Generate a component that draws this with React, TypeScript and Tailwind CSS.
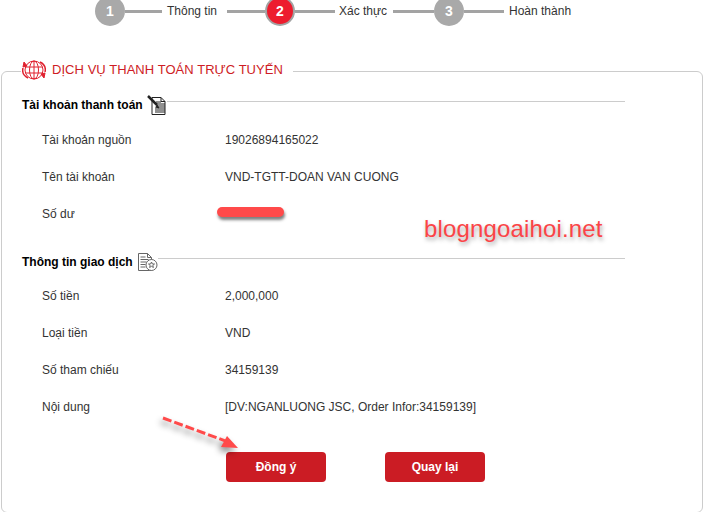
const STEPS_BAR = "h-[3px] bg-[#a3a3a3] shrink-0";

function Circle({ n, active }: { n: number; active?: boolean }) {
  return (
    <div
      className={`flex h-[30px] w-[30px] shrink-0 items-center justify-center rounded-full text-[14px] font-bold text-white ${
        active ? "border-2 border-[#a3a3a3] bg-[#ed1c2e]" : "bg-[#a9a9a9]"
      }`}
    >
      {n}
    </div>
  );
}

function Stepper() {
  return (
    <div className="-mt-[4px] flex h-[30px] items-center pl-[95px] text-[12px] text-[#333]">
      <Circle n={1} />
      <div className={`${STEPS_BAR} w-[37px]`} />
      <span className="ml-[5px] w-[55px] whitespace-nowrap">Thông tin</span>
      <div className={`${STEPS_BAR} ml-[5px] w-[38px]`} />
      <Circle n={2} active />
      <div className={`${STEPS_BAR} w-[40px]`} />
      <span className="ml-[4px] w-[49px] whitespace-nowrap">Xác thực</span>
      <div className={`${STEPS_BAR} ml-[5px] w-[41px]`} />
      <Circle n={3} />
      <div className={`${STEPS_BAR} w-[40px]`} />
      <span className="ml-[5px] whitespace-nowrap">Hoàn thành</span>
    </div>
  );
}

function GlobeIcon() {
  return (
    <svg width="24" height="22" viewBox="0 0 24 22" fill="none" stroke="#e0202e" strokeWidth="1">
      <circle cx="12" cy="11" r="9" />
      <ellipse cx="12" cy="11" rx="4.5" ry="9" />
      <path d="M12 2v18M3.5 8h17M3.5 14h17" />
      <path d="M1 9c-1 4 1 8 5 10M23 13c1-4-1-8-5-10" strokeWidth="1.5" />
      <path d="M19 15l4-1-1 5zM5 7L1 8l1-5z" fill="#e0202e" />
    </svg>
  );
}

function DocPenIcon() {
  return (
    <svg width="20" height="20" viewBox="0 0 20 20" fill="none" stroke="#222" strokeWidth="1">
      <path d="M5 2.5h9l4 4v13H5z" fill="#fff" />
      <path d="M14 2.5v4h4" />
      <path d="M9 7h5M8 9h10M10 11h8M8 13h10M8 15h10M8 17h10" />
      <path d="M1 1l9 9" strokeWidth="2.5" />
      <path d="M10 10l2 3-3-1z" fill="#222" />
    </svg>
  );
}

function DocStarIcon() {
  return (
    <svg width="21" height="20" viewBox="0 0 21 20" fill="none" stroke="#666" strokeWidth="1">
      <path d="M1.5 1.5h9l4 4v13h-13z" fill="#fff" />
      <path d="M10.5 1.5v4h4" />
      <path d="M3.5 5h5M3.5 7.5h8M3.5 10h6M3.5 12.5h5M3.5 15h5" />
      <circle cx="14.5" cy="13" r="5.5" fill="#fff" />
      <path d="M14.5 10l.9 2h2.1l-1.7 1.4.6 2.1-1.9-1.2-1.9 1.2.6-2.1L11.5 12h2.1z" />
    </svg>
  );
}

function SectionTitle({ title, children }: { title: string; children: React.ReactNode }) {
  return (
    <div className="flex h-[20px] items-center pl-[20px] pr-[77px]">
      <span className="mt-[2px] whitespace-nowrap text-[12px] font-bold text-black">{title}</span>
      <span className="mt-[2px] ml-[4px] shrink-0">{children}</span>
      <div className="-mt-[5px] h-px flex-1 bg-[#ccc]" />
    </div>
  );
}

function Row({ label, value }: { label: string; value: string }) {
  return (
    <div className="flex h-[37px] items-center pl-[40px] text-[12px] text-[#333]">
      <span className="w-[183px] shrink-0">{label}</span>
      <span>{value}</span>
    </div>
  );
}

function PrimaryButton({ label }: { label: string }) {
  return (
    <button
      type="button"
      className="h-[30px] w-[100px] rounded-[4px] bg-[#cb1c24] text-[12px] font-bold text-white"
    >
      {label}
    </button>
  );
}

export default function App() {
  return (
    <div className="relative h-[512px] w-[704px] overflow-hidden bg-white font-['Liberation_Sans',Arial,sans-serif]">
      <Stepper />

      <fieldset className="mx-px mt-[33px] h-[454px] rounded-[6px] border border-[#ccc] pt-[11px]">
        <legend className="ml-[19px] flex h-[24px] items-center pr-[10px] pb-[3px] pl-px">
          <GlobeIcon />
          <span className="ml-[6px] whitespace-nowrap text-[13px] tracking-[0.05px] text-[#ce1c25]">
            DỊCH VỤ THANH TOÁN TRỰC TUYẾN
          </span>
        </legend>

        <SectionTitle title="Tài khoản thanh toán">
          <DocPenIcon />
        </SectionTitle>
        <div className="mt-[7px]">
          <Row label="Tài khoản nguồn" value="19026894165022" />
          <Row label="Tên tài khoản" value="VND-TGTT-DOAN VAN CUONG" />
          <Row label="Số dư" value="" />
        </div>

        <div className="mt-[19px]">
          <SectionTitle title="Thông tin giao dịch">
            <DocStarIcon />
          </SectionTitle>
        </div>
        <div className="mt-[6px]">
          <Row label="Số tiền" value="2,000,000" />
          <Row label="Loại tiền" value="VND" />
          <Row label="Số tham chiếu" value="34159139" />
          <Row label="Nội dung" value="[DV:NGANLUONG JSC, Order Infor:34159139]" />
        </div>

        <div className="mt-[27px] flex gap-[59px] pl-[224px]">
          <PrimaryButton label="Đồng ý" />
          <PrimaryButton label="Quay lại" />
        </div>
      </fieldset>

      {/* annotations painted over the screenshot */}
      <div className="absolute top-[207px] left-[217px] h-[10px] w-[67px] rounded-full bg-[#ff4a4a] shadow-[1px_3px_3px_rgba(0,0,0,0.5)]" />
      <span className="absolute top-[215px] left-[424px] text-[24px] leading-[28px] tracking-[0.15px] whitespace-nowrap text-[#fb4447] [text-shadow:1px_3px_4px_rgba(0,0,0,0.35)]">
        blogngoaihoi.net
      </span>
      <svg
        className="absolute top-[410px] left-[155px] drop-shadow-[-2px_4px_3px_rgba(0,0,0,0.45)]"
        width="95"
        height="50"
        viewBox="0 0 95 50"
        fill="none"
      >
        <path d="M8 8L76 33" stroke="#ff4a4a" strokeWidth="3" strokeDasharray="9 3" />
        <path d="M72 26L83 38L66 37z" fill="#ff4a4a" />
      </svg>
    </div>
  );
}
